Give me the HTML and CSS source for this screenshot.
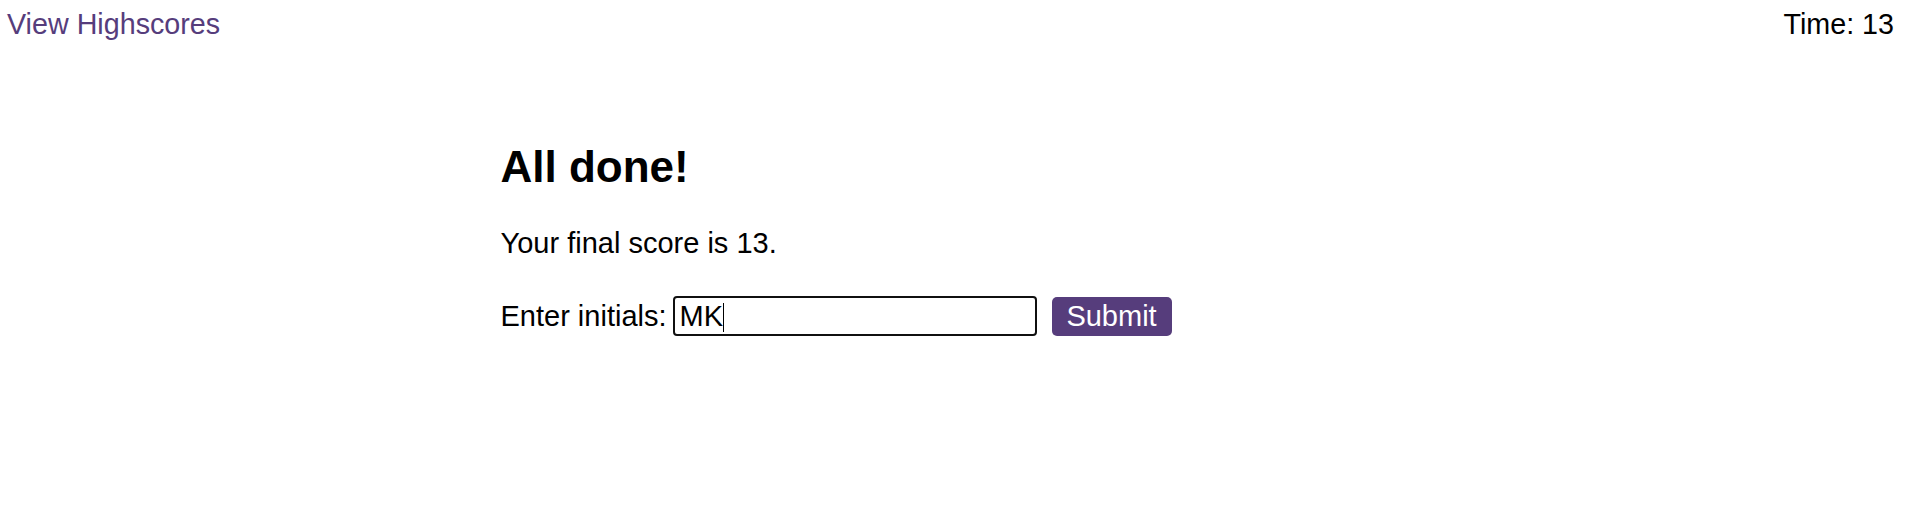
FILE: index.html
```html
<!DOCTYPE html>
<html lang="en">
<head>
<meta charset="utf-8">
<title>Quiz</title>
<link rel="stylesheet" href="styles.css">
</head>
<body>
<header class="topbar">
  <a class="highscores-link" href="#">View Highscores</a>
  <div class="timer">Time: 13</div>
</header>
<main class="quiz">
  <section class="done">
    <h2 class="done-title">All done!</h2>
    <p class="done-score">Your final score is 13.</p>
    <form class="initials-form" onsubmit="return false;">
      <label class="initials-label" for="initials">Enter initials:</label>
      <span class="input-wrap">
        <input class="initials-input" id="initials" type="text" value="MK">
        <span class="fake-caret"></span>
      </span>
      <button class="submit-btn" type="submit">Submit</button>
    </form>
  </section>
</main>
</body>
</html>
```

FILE: styles.css
```css
html, body {
  margin: 0;
  padding: 0;
  background: #ffffff;
}

body {
  font-family: "Liberation Sans", Arial, sans-serif;
  font-size: 29px;
  color: #000000;
}

.topbar {
  display: flex;
  justify-content: space-between;
  align-items: flex-start;
  padding: 8px 17px 0 7px;
  line-height: normal;
  font-size: 28.7px;
}

.highscores-link {
  color: #563d7c;
  text-decoration: none;
}

.timer {
  color: #000000;
}

.quiz {
  width: 910px;
  margin: 0 auto;
  padding-top: 101px;
}

.done-title {
  margin: 0 0 35px;
  font-size: 44px;
  font-weight: bold;
  line-height: normal;
}

.done-score {
  margin: 0 0 36px;
  line-height: normal;
}

.initials-form {
  display: flex;
  align-items: center;
  margin: 0;
}

.initials-label {
  margin-right: 6px;
}

.input-wrap {
  position: relative;
  display: block;
}

.initials-input {
  display: block;
  box-sizing: border-box;
  width: 364px;
  height: 40px;
  padding: 0 5px;
  border: 2px solid #101010;
  border-radius: 4px;
  outline: none;
  font-family: "Liberation Sans", Arial, sans-serif;
  font-size: 29px;
  color: #000000;
  background: #ffffff;
}

.fake-caret {
  position: absolute;
  left: 50px;
  top: 7px;
  width: 1px;
  height: 29px;
  background: #000000;
}

.submit-btn {
  box-sizing: border-box;
  width: 120px;
  height: 39px;
  margin-left: 15px;
  padding: 0;
  border: none;
  border-radius: 5px;
  background: #563d7c;
  color: #ffffff;
  font-family: "Liberation Sans", Arial, sans-serif;
  font-size: 29px;
  line-height: 1;
  text-align: center;
  cursor: pointer;
}
```
